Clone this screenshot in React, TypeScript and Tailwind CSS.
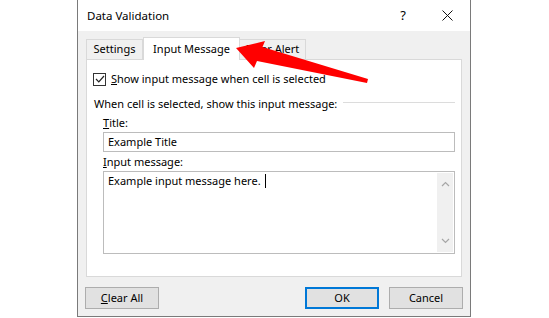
import React from "react";

const ChevronUp = () => (
  <svg width="9" height="6" viewBox="0 0 9 6" fill="none">
    <path d="M1 5 L4.5 1.5 L8 5" stroke="#a6a6a6" strokeWidth="1.2" />
  </svg>
);

const ChevronDown = () => (
  <svg width="9" height="6" viewBox="0 0 9 6" fill="none">
    <path d="M1 1 L4.5 4.5 L8 1" stroke="#a6a6a6" strokeWidth="1.2" />
  </svg>
);

const App: React.FC = () => {
  return (
    <div
      className="relative w-[549px] h-[318px] bg-white pl-[77px] text-[11px] text-black overflow-hidden"
      style={{ fontFamily: '"Noto Sans", "Open Sans", sans-serif' }}
    >
      <div className="w-[394px] h-[317px] flex flex-col border-x border-b border-[#7a7a7a]">
        {/* Title bar */}
        <div className="h-[31px] bg-white flex items-center pl-[9px] pr-[17px]">
          <span className="flex-1 text-[11.5px]">Data Validation</span>
          <span className="mr-[36px] text-[13px]">?</span>
          <svg width="11" height="11" viewBox="0 0 11 11">
            <path d="M0.5 0.5 L10.5 10.5 M10.5 0.5 L0.5 10.5" stroke="#111" strokeWidth="1" />
          </svg>
        </div>

        {/* Body */}
        <div className="flex-1 bg-[#f0f0f0] px-[8px] pt-[6px] flex flex-col">
          {/* Tabs */}
          <div className="flex items-end h-[22px] relative z-10">
            <div className="h-[20px] w-[57px] flex items-center justify-center border border-b-0 border-[#d9d9d9] bg-[#f0f0f0]">
              Settings
            </div>
            <div className="h-[23px] w-[97px] -mb-px flex items-center justify-center border border-b-0 border-[#d9d9d9] bg-white">
              Input Message
            </div>
            <div className="h-[20px] w-[66px] flex items-center justify-center border border-b-0 border-l-0 border-[#d9d9d9] bg-[#f0f0f0]">
              Error Alert
            </div>
          </div>

          {/* Panel */}
          <div className="h-[218px] bg-white border border-[#d9d9d9] pl-[6px] pr-[6px] pt-[12px] flex flex-col">
            <div className="flex items-center h-[14px]">
              <div className="w-[13px] h-[13px] border border-[#333] flex items-center justify-center">
                <svg width="10" height="8" viewBox="0 0 10 8">
                  <path d="M1 4 L3.8 6.8 L9 1" stroke="#222" strokeWidth="1.2" fill="none" />
                </svg>
              </div>
              <span className="ml-[5px]">
                <span className="underline">S</span>how input message when cell is selected
              </span>
            </div>

            <div className="flex items-center mt-[10px] pl-px h-[16px]">
              <span>When cell is selected, show this input message:</span>
              <div className="flex-1 h-px bg-[#dcdcdc] ml-[6px] -mt-[3px]" />
            </div>

            <div className="pl-[10px] flex flex-col">
              <div className="mt-[3px] h-[16px] flex items-center">
                <span>
                  <span className="underline">T</span>itle:
                </span>
              </div>
              <div className="mt-px h-[20px] border border-[#bcbcbc] flex items-center px-[4px]">
                Example Title
              </div>
              <div className="mt-[2px] h-[16px] flex items-center">
                <span>
                  <span className="underline">I</span>nput message:
                </span>
              </div>
              <div className="mt-px h-[83px] border border-[#bcbcbc] flex">
                <div className="flex-1 px-[4px] pt-[1px] flex items-start">
                  <span>Example input message here.</span>
                  <span className="inline-block w-px h-[14px] bg-black ml-[4px] mt-[1px]" />
                </div>
                <div className="w-[16px] my-px mr-px bg-[#f0f0f0] flex flex-col items-center justify-between py-[8px]">
                  <ChevronUp />
                  <ChevronDown />
                </div>
              </div>
            </div>
          </div>

          {/* Buttons */}
          <div className="flex items-center mt-[10px] -ml-px">
            <button className="w-[74px] h-[22px] bg-[#e1e1e1] border border-[#adadad] flex items-center justify-center">
              <span>
                <span className="underline">C</span>lear All
              </span>
            </button>
            <div className="flex-1" />
            <button className="w-[74px] h-[22px] bg-[#e1e1e1] border-2 border-[#0078d7] flex items-center justify-center">
              OK
            </button>
            <button className="ml-[10px] mr-[-1px] w-[74px] h-[22px] bg-[#e1e1e1] border border-[#adadad] flex items-center justify-center">
              Cancel
            </button>
          </div>
        </div>
      </div>

      {/* Red annotation arrow */}
      <svg className="absolute left-0 top-0 z-20 pointer-events-none" width="549" height="318" viewBox="0 0 549 318">
        <polygon
          points="236,48 265,41 262.5,47 368,79 367,83 257,61 254,68"
          fill="#ff0000"
        />
      </svg>
    </div>
  );
};

export default App;
